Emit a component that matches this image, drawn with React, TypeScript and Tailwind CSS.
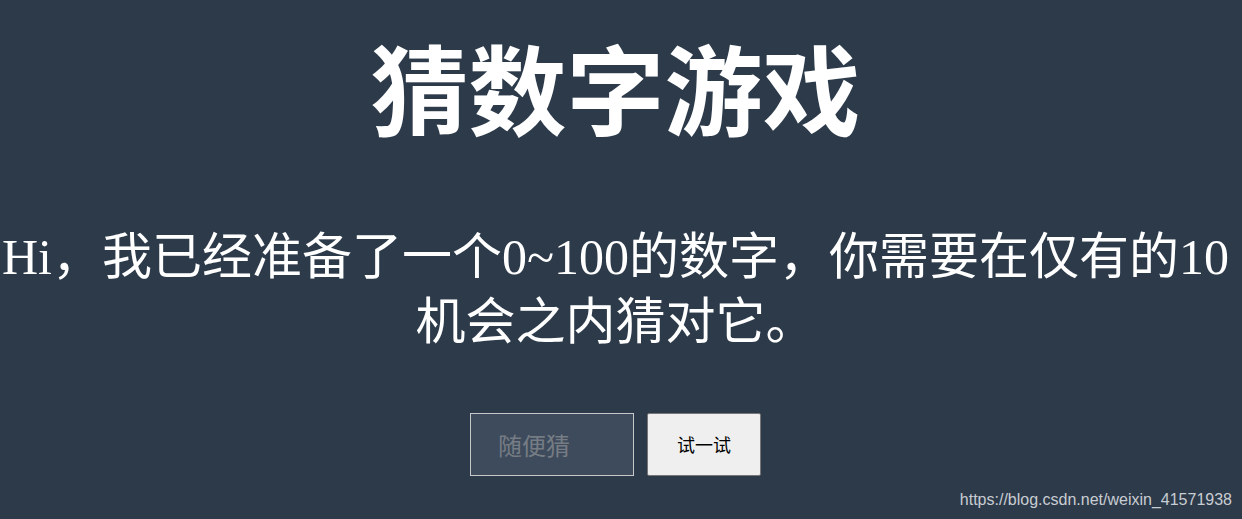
import { useState } from "react";

export default function App() {
  const [guess, setGuess] = useState("");

  return (
    <div className="relative w-[1242px] h-[519px] overflow-hidden bg-[#2c3a4a] text-white font-['Noto_Sans_CJK_SC',sans-serif]">
      <div className="w-[1231px] flex flex-col items-center">
        <h1 className="mt-[36px] text-[98px] leading-none font-bold text-center">
          猜数字游戏
        </h1>
        <p className="mt-[91px] w-full text-center text-[50px] leading-[65px] font-['Liberation_Serif','Noto_Sans_CJK_SC',serif]">
          Hi，我已经准备了一个0~100的数字，你需要在仅有的10机会之内猜对它。
        </p>
        <div className="mt-[58px] flex gap-[13px]">
          <input
            value={guess}
            onChange={(e) => setGuess(e.target.value)}
            placeholder="随便猜"
            className="w-[164px] h-[63px] bg-[#3d4b5c] border border-[#c8c8c8] pl-[27px] text-[24px] text-white placeholder:text-[#767c84] outline-none"
          />
          <button className="w-[114px] h-[63px] bg-[#efefef] border border-[#767676] rounded-[2px] text-black text-[18px]">
            试一试
          </button>
        </div>
      </div>
      <div className="absolute right-[10px] bottom-[11px] text-[16px] leading-none text-[#c9cdd2] font-['Liberation_Sans',Arial,sans-serif]">
        https://blog.csdn.net/weixin_41571938
      </div>
    </div>
  );
}
